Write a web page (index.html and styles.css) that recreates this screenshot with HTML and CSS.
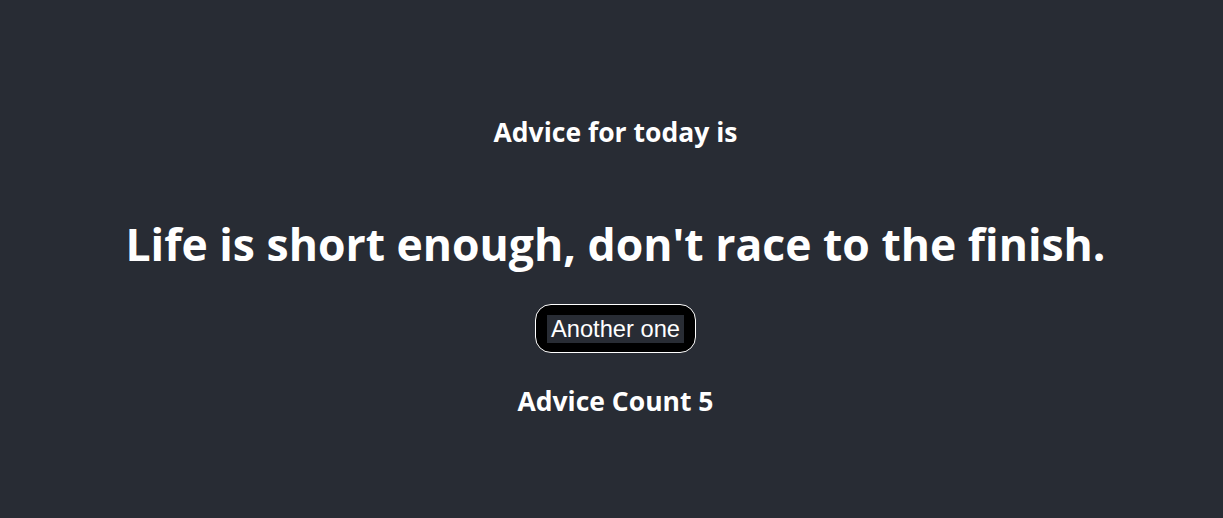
FILE: index.html
```html
<!DOCTYPE html>
<html>
<head>
<meta charset="utf-8">
<link rel="stylesheet" href="styles.css">
</head>
<body>
<div class="app">
  <h3 class="title">Advice for today is</h3>
  <h1 class="advice">Life is short enough, don't race to the finish.</h1>
  <button class="another"><span class="another-label">Another one</span></button>
  <h3 class="count">Advice Count 5</h3>
</div>
</body>
</html>
```
FILE: styles.css
```css
html, body {
  margin: 0;
  padding: 0;
  background: #282c34;
}
.app {
  min-height: 518px;
  box-sizing: border-box;
  padding: 114px 0 0 8px;
  display: flex;
  flex-direction: column;
  align-items: center;
  color: #fff;
  font-family: "Open Sans", "Noto Sans", sans-serif;
}
.title, .count {
  margin: 0;
  font-size: 26.5px;
  font-weight: 700;
  line-height: 36px;
}
.advice {
  margin: 64px 0 0 0;
  font-size: 44.5px;
  font-weight: 700;
  line-height: 60px;
}
.another {
  margin-top: 30px;
  background: #000;
  border: 1px solid #fff;
  border-radius: 16px;
  padding: 10px 11px 9px;
  cursor: pointer;
}
.another-label {
  display: block;
  background: #282c34;
  color: #fff;
  font-family: "Liberation Sans", Arial, sans-serif;
  font-size: 23.7px;
  line-height: 28px;
  padding: 0 4px;
}
.count {
  margin-top: 30px;
}
```
